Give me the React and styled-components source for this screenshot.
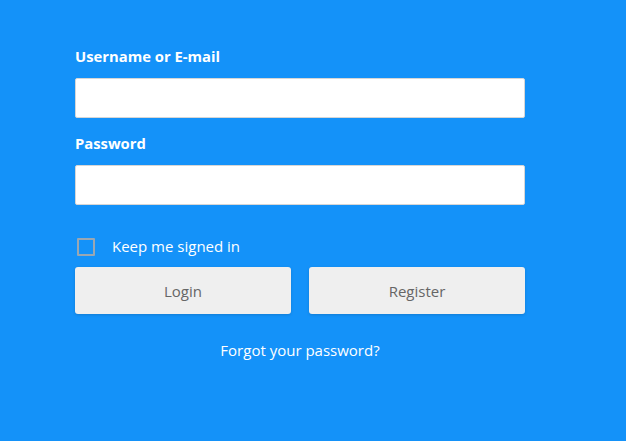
import React, { useState } from "react";
import styled, { createGlobalStyle } from "styled-components";

const GlobalStyle = createGlobalStyle`
  html, body {
    margin: 0;
    padding: 0;
    background: #1492f9;
    font-family: "Open Sans", "Noto Sans", sans-serif;
  }
`;

const Page = styled.div`
  min-height: 441px;
  background: #1492f9;
  padding: 46px 0 0 75px;
  box-sizing: border-box;
`;

const Form = styled.form`
  width: 450px;
  display: flex;
  flex-direction: column;
`;

const Label = styled.label`
  color: #fff;
  font-size: 14.8px;
  font-weight: 700;
  line-height: 20px;
  margin-bottom: 12px;
`;

const Input = styled.input`
  height: 40px;
  box-sizing: border-box;
  border: 1px solid #d6d6d6;
  border-radius: 2px;
  background: #fff;
  margin-bottom: ${(p) => p.$gap || 0}px;
  outline: none;
  padding: 0 10px;
  font-family: inherit;
`;

const CheckRow = styled.label`
  display: flex;
  align-items: center;
  gap: 17px;
  margin: 33px 0 11px 2px;
  color: #fff;
  font-size: 15px;
  line-height: 20px;
  cursor: pointer;
`;

const CheckText = styled.span`
  margin-top: -2px;
`;

const Box = styled.span`
  width: 18px;
  height: 18px;
  box-sizing: border-box;
  border: 2px solid #9aa7b3;
  border-radius: 1px;
  background: ${(p) => (p.$on ? "#fff" : "transparent")};
`;

const Buttons = styled.div`
  display: grid;
  grid-template-columns: 1fr 1fr;
  gap: 18px;
`;

const Button = styled.button`
  height: 47px;
  border: none;
  border-radius: 3px;
  background: #efefef;
  color: #666;
  font-family: inherit;
  font-size: 15px;
  box-shadow: 0 1px 3px rgba(0, 0, 0, 0.15);
  cursor: pointer;
`;

const Forgot = styled.a`
  align-self: center;
  margin-top: 26px;
  color: #fff;
  font-size: 15px;
  line-height: 20px;
  text-decoration: none;
`;

export default function App() {
  const [keep, setKeep] = useState(false);
  return (
    <>
      <GlobalStyle />
      <Page>
        <Form onSubmit={(e) => e.preventDefault()}>
          <Label>Username or E-mail</Label>
          <Input type="text" $gap={15} />
          <Label>Password</Label>
          <Input type="password" />
          <CheckRow onClick={() => setKeep(!keep)}>
            <Box $on={keep} />
            <CheckText>Keep me signed in</CheckText>
          </CheckRow>
          <Buttons>
            <Button type="submit">Login</Button>
            <Button type="button">Register</Button>
          </Buttons>
          <Forgot href="#">Forgot your password?</Forgot>
        </Form>
      </Page>
    </>
  );
}
